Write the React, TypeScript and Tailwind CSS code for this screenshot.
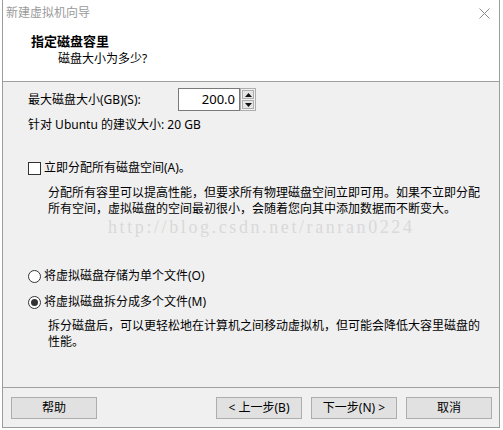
import React from 'react';

const ui = { fontFamily: '"Noto Sans", "Noto Sans CJK SC", sans-serif' };

function Checkbox() {
  return <span className="inline-block w-[13px] h-[13px] border border-[#333333] bg-white shrink-0" />;
}

function Radio({ checked }: { checked?: boolean }) {
  return (
    <span className="w-[13px] h-[13px] rounded-full border border-[#333333] bg-white shrink-0 flex items-center justify-center">
      {checked && <span className="w-[7px] h-[7px] rounded-full bg-[#333333]" />}
    </span>
  );
}

function Spinner() {
  return (
    <div className="flex flex-col w-[16px] h-[23px] border border-[#adadad] bg-[#f0f0f0] p-[1px] gap-[1px]">
      <div className="flex-1 flex items-center justify-center bg-[#e5e5e5] border border-[#adadad]">
        <svg width="7" height="4" viewBox="0 0 7 4"><path d="M0 4 L3.5 0 L7 4 Z" fill="#111" /></svg>
      </div>
      <div className="flex-1 flex items-center justify-center bg-[#e5e5e5] border border-[#adadad]">
        <svg width="7" height="4" viewBox="0 0 7 4"><path d="M0 0 L3.5 4 L7 0 Z" fill="#111" /></svg>
      </div>
    </div>
  );
}

function Btn({ label }: { label: string }) {
  return (
    <button className="w-[86px] h-[22px] bg-[#e1e1e1] border border-[#adadad] text-[12px] leading-none text-black flex items-center justify-center">
      {label}
    </button>
  );
}

export default function App() {
  return (
    <div className="w-[503px] h-[430px] bg-white overflow-hidden text-black" style={ui}>
      <div className="ml-[2px] w-[498px] h-[428px] border-l border-r border-b border-[#9c9c9c] flex flex-col">
        {/* title bar */}
        <div className="h-[30px] bg-white flex items-center justify-between pl-[3px] pr-[9px] pb-[4px]">
          <span className="text-[12px] text-[#9a9a9a]">新建虚拟机向导</span>
          <svg width="11" height="11" viewBox="0 0 11 11" className="mt-[1px]">
            <path d="M0.5 0.5 L10.5 10.5 M10.5 0.5 L0.5 10.5" stroke="#8a8a8a" strokeWidth="1" />
          </svg>
        </div>

        {/* header */}
        <div className="h-[52px] bg-white border-b border-[#a0a0a0] flex flex-col">
          <div className="pl-[28px] mt-[2px] text-[13px] font-bold leading-[18px]">指定磁盘容里</div>
          <div className="pl-[55px] text-[12px] leading-[18px]">磁盘大小为多少?</div>
        </div>

        {/* content */}
        <div className="flex-1 bg-[#f0f0f0] pl-[25px] text-[12px] flex flex-col">
          <div className="flex items-center mt-[6px] h-[23px]">
            <span className="w-[150px] leading-[16px]">最大磁盘大小(GB)(S):</span>
            <div className="w-[62px] h-[23px] bg-white border border-[#7a7a7a] flex items-center justify-end pr-[4px] text-[13px]">200.0</div>
            <Spinner />
          </div>
          <div className="mt-[6px] leading-[16px]">针对 Ubuntu 的建议大小: 20 GB</div>

          <div className="mt-[27px] flex items-center gap-[3px] h-[16px]">
            <Checkbox />
            <span className="leading-[16px]">立即分配所有磁盘空间(A)。</span>
          </div>
          <div className="mt-[9px] pl-[20px] leading-[16px]">
            <div>分配所有容里可以提高性能，但要求所有物理磁盘空间立即可用。如果不立即分配</div>
            <div>所有空间，虚拟磁盘的空间最初很小，会随着您向其中添加数据而不断变大。</div>
          </div>
          <div
            className="pl-[80px] h-[20px] text-[18px] leading-[20px] text-[#d9d9d9] tracking-[2.6px]"
            style={{ fontFamily: '"Liberation Serif", serif' }}
          >
            http://blog.csdn.net/ranran0224
          </div>

          <div className="mt-[31px] flex items-center gap-[3px] h-[16px]">
            <Radio />
            <span className="leading-[16px]">将虚拟磁盘存储为单个文件(O)</span>
          </div>
          <div className="mt-[10px] flex items-center gap-[3px] h-[16px]">
            <Radio checked />
            <span className="leading-[16px]">将虚拟磁盘拆分成多个文件(M)</span>
          </div>
          <div className="mt-[8px] pl-[20px] leading-[16px]">
            <div>拆分磁盘后，可以更轻松地在计算机之间移动虚拟机，但可能会降低大容里磁盘的</div>
            <div>性能。</div>
          </div>
        </div>

        {/* footer */}
        <div className="h-[40px] bg-[#f0f0f0] border-t border-[#a0a0a0] flex items-start pt-[9px] pl-[8px] pr-[7px]">
          <Btn label="帮助" />
          <div className="flex-1" />
          <div className="flex gap-[9px]">
            <Btn label="< 上一步(B)" />
            <Btn label="下一步(N) >" />
            <Btn label="取消" />
          </div>
        </div>
      </div>
    </div>
  );
}
